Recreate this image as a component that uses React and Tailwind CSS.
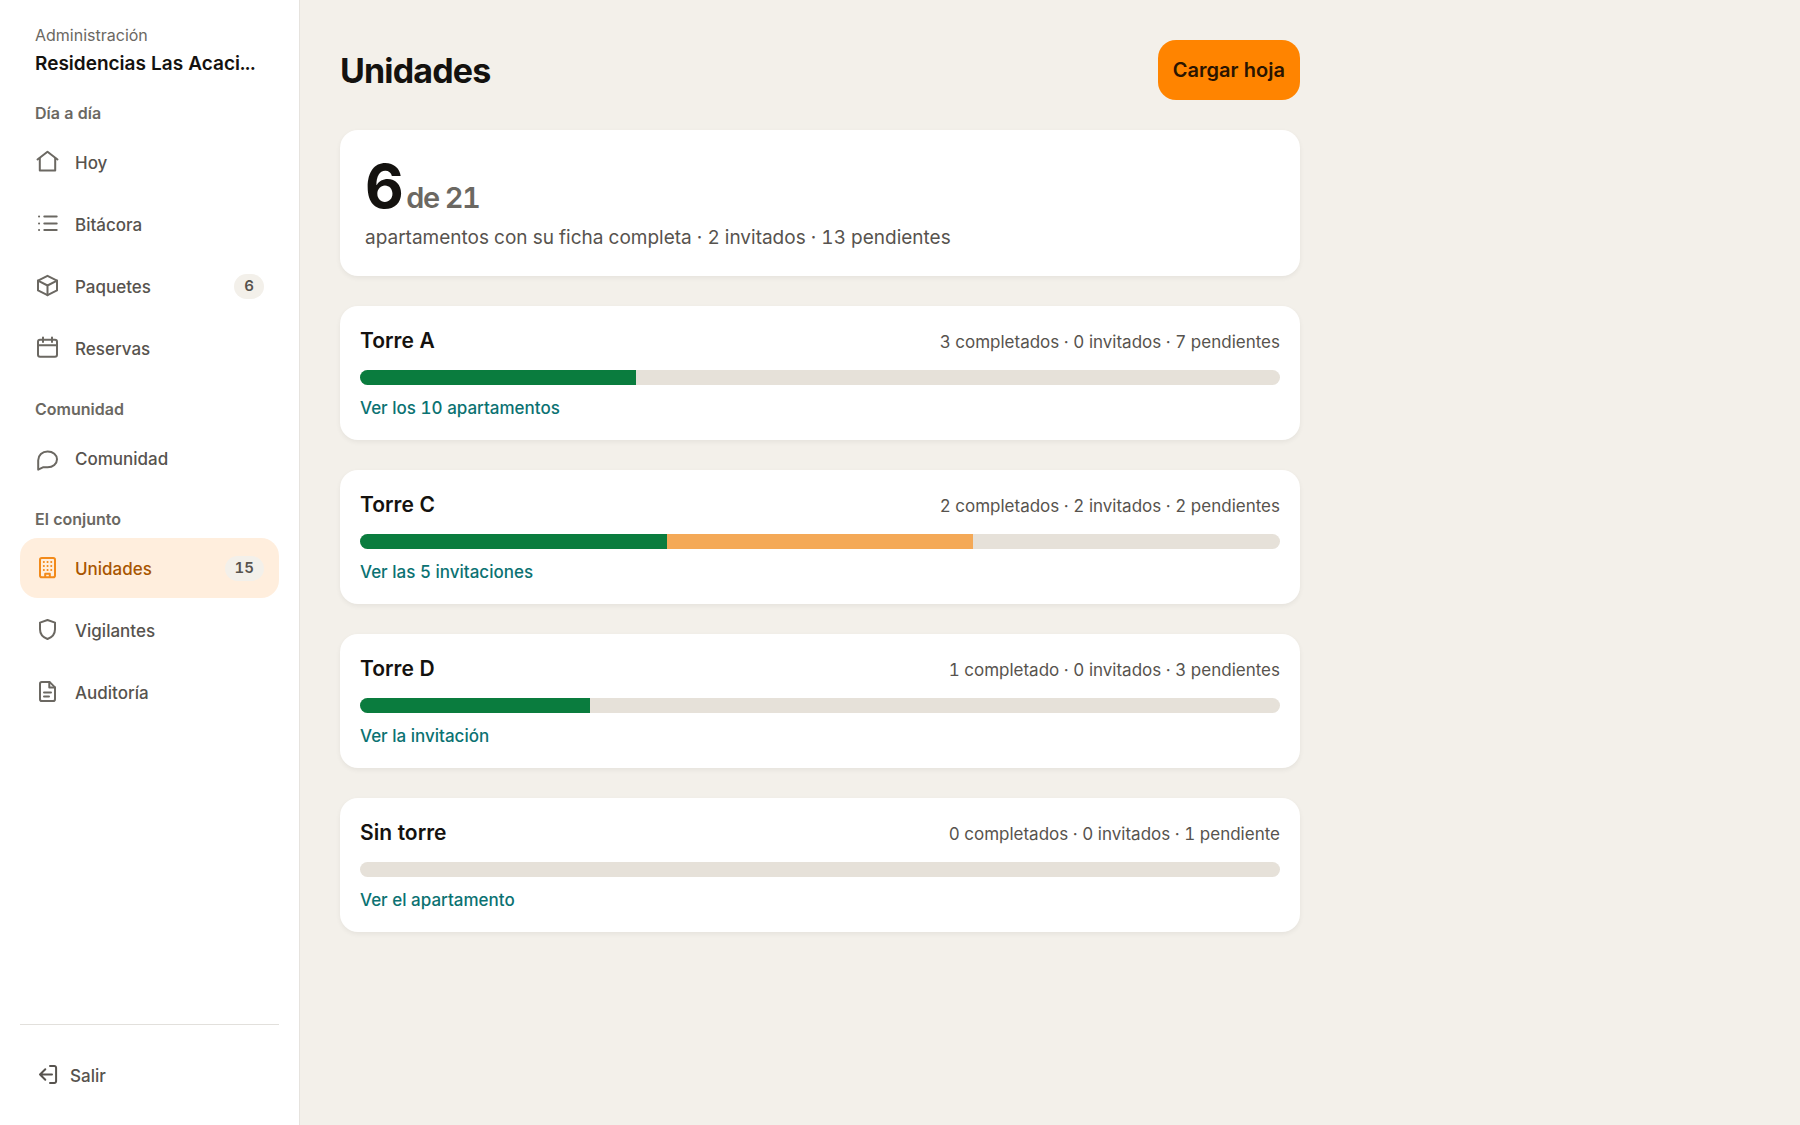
import { useState } from 'react'

const icons = {
  home: (
    <>
      <path d="M2.5 10.5 12.5 2.7l10 7.8" />
      <path d="M4.8 9v12.6h15.4V9" />
    </>
  ),
  list: (
    <>
      <path d="M9.3 5.6h12.4M9.3 12.4h12.4M9.3 19h12.4" />
      <path d="M4 5.6h.1M4 12.4h.1M4 19h.1" />
    </>
  ),
  box: (
    <>
      <path d="M12.5 2.8 22 7.6v9.8l-9.5 4.8L3 17.4V7.6z" />
      <path d="M3 7.6l9.5 4.9L22 7.6M12.5 12.5v9.7" />
    </>
  ),
  calendar: (
    <>
      <rect x="3" y="4.8" width="19" height="17" rx="2" />
      <path d="M3 10.2h19M8 2.5v4.6M17 2.5v4.6" />
    </>
  ),
  chat: (
    <path d="M3.2 24.6v-9.4c0-5 4-8.8 9.4-8.8s9.4 3.4 9.4 7.9-4 7.9-9.4 7.900H8.400z" />
  ),
  building: (
    <>
      <rect x="5" y="3" width="15" height="19.2" rx="1.8" />
      <path d="M10.200 22v-3.200h4.600V22" />
      <path d="M8.800 7h.1M12.500 7h.1M16.200 7h.1M8.800 11h.1M12.500 11h.1M16.200 11h.1M8.800 15h.1M12.500 15h.1M16.200 15h.1" />
    </>
  ),
  shield: (
    <path d="M12.500 3 20 5.600v6.600c0 4.700-2.700 8-7.500 9.800C7.700 20.200 5 16.900 5 12.200V5.600z" />
  ),
  file: (
    <>
      <path d="M14.500 2.900H6.800A1.800 1.800 0 0 0 5 4.700v15.600a1.800 1.800 0 0 0 1.800 1.800h11.400a1.800 1.800 0 0 0 1.800-1.800V8.400z" />
      <path d="M14.300 3v5.600H20M9 13.400h7M9 17.400h5" />
    </>
  ),
  logout: (
    <>
      <path d="M5 12.500h12M10.300 7.200 5 12.500l5.300 5.300" />
      <path d="M15 3.900h4.300a1.800 1.800 0 0 1 1.800 1.800v13.600a1.800 1.800 0 0 1-1.800 1.800H15" />
    </>
  )
}

const sections = [
  {
    title: 'Día a día',
    items: [
      { label: 'Hoy', icon: 'home' },
      { label: 'Bitácora', icon: 'list' },
      { label: 'Paquetes', icon: 'box', count: 6 },
      { label: 'Reservas', icon: 'calendar' }
    ]
  },
  { title: 'Comunidad', items: [{ label: 'Comunidad', icon: 'chat' }] },
  {
    title: 'El conjunto',
    items: [
      { label: 'Unidades', icon: 'building', count: 15 },
      { label: 'Vigilantes', icon: 'shield' },
      { label: 'Auditoría', icon: 'file' }
    ]
  }
]

const towers = [
  { name: 'Torre A', done: 3, invited: 0, pending: 7, link: 'Ver los 10 apartamentos' },
  { name: 'Torre C', done: 2, invited: 2, pending: 2, link: 'Ver las 5 invitaciones' },
  { name: 'Torre D', done: 1, invited: 0, pending: 3, link: 'Ver la invitación' },
  { name: 'Sin torre', done: 0, invited: 0, pending: 1, link: 'Ver el apartamento' }
]

const plural = (n, word) => `${n} ${word}${n === 1 ? '' : 's'}`

function Icon({ name, className = '' }) {
  return (
    <svg viewBox="0 1 25 25" fill="none" stroke="currentColor" strokeWidth="2" strokeLinecap="round" strokeLinejoin="round"
      aria-hidden="true" className={`size-[25px] shrink-0 ${className}`}>
      {icons[name]}
    </svg>
  )
}

function NavItem({ item, active, onSelect }) {
  return (
    <a href="#" onClick={(e) => { e.preventDefault(); onSelect(item.label) }}
      aria-current={active ? 'page' : undefined}
      className={`flex h-15 items-center gap-[15px] rounded-[18px] px-[15px] text-[17px] leading-6 font-medium ${active ? 'bg-[#ffeedd] text-[#a85500]' : 'text-[#57534e]'}`}>
      <Icon name={item.icon} className={active ? 'text-[#f28a1a]' : 'text-[#6b6862]'} />
      <span className="flex-1 pt-px">{item.label}</span>
      {item.count && (
        <span className="flex h-[25px] min-w-[30px] items-center justify-center rounded-full bg-[#f3f0ea] px-[10px] text-[15px] font-semibold text-[#57534e]">
          {item.count}
        </span>
      )}
    </a>
  )
}

function TowerCard({ tower }) {
  const { name, done, invited, pending, link } = tower
  const total = done + invited + pending

  return (
    <section className="rounded-[18px] bg-white p-5 shadow-[0_2px_5px_rgba(0,0,0,0.06)]">
      <div className="flex items-baseline justify-between">
        <h2 className="text-[21px] leading-[30px] font-semibold">{name}</h2>
        <p className="text-[17px] leading-6 text-[#57534e]">
          {plural(done, 'completado')} · {plural(invited, 'invitado')} · {plural(pending, 'pendiente')}
        </p>
      </div>
      <div className="mt-[14px] flex h-[15px] overflow-hidden rounded-full bg-[#e6e1d9]">
        <div className="bg-[#0a7c3e]" style={{ width: `${(done / total) * 100}%` }} />
        <div className="bg-[#f4a957]" style={{ width: `${(invited / total) * 100}%` }} />
      </div>
      <a href="#" className="mt-[11px] inline-block align-top text-[17px] leading-6 font-medium text-[#0b7272]">{link}</a>
    </section>
  )
}

export default function App() {
  const [current, setCurrent] = useState('Unidades')

  return (
    <div className="flex min-h-screen bg-[#f3f0ea] font-['Inter',sans-serif] text-[#14120f] tabular-nums">
      <aside className="flex w-[300px] shrink-0 flex-col border-r border-[#e6e3de] bg-white px-5 pt-6 pb-5">
        <div className="px-[15px]">
          <p className="text-[16px] leading-[22px] text-[#6b6862]">Administración</p>
          <p className="mt-[3px] truncate text-[19px] leading-[30px] font-semibold">Residencias Las Acaci...</p>
        </div>
        <nav className="mt-[3px]">
          {sections.map((section) => (
            <div key={section.title} className="pt-[21px]">
              <h2 className="mb-[9px] px-[15px] text-[16px] leading-5 font-semibold text-[#6b6862]">{section.title}</h2>
              <div className="flex flex-col gap-[2px]">
                {section.items.map((item) => (
                  <NavItem key={item.label} item={item} active={current === item.label} onSelect={setCurrent} />
                ))}
              </div>
            </div>
          ))}
        </nav>
        <div className="mt-auto border-t border-[#e2e0dc] pt-5">
          <button type="button" className="flex h-15 w-full items-center gap-[10px] px-[15px] text-[17px] leading-6 font-medium text-[#57534e]">
            <Icon name="logout" />
            <span className="pt-px">Salir</span>
          </button>
        </div>
      </aside>

      <main className="min-w-0 flex-1 p-10">
        <div className="flex max-w-[960px] flex-col gap-[30px]">
          <header className="flex items-center justify-between">
            <h1 className="pt-[2px] text-[34px] leading-[44px] font-bold tracking-tight">Unidades</h1>
            <button type="button" className="h-15 rounded-[18px] bg-[#ff8400] px-[15px] text-[20px] font-semibold text-[#2a1400]">Cargar hoja</button>
          </header>

          <section className="rounded-[18px] bg-white px-[25px] pt-6 pb-[23px] shadow-[0_2px_5px_rgba(0,0,0,0.06)]">
            <p className="text-[60px] leading-16 font-bold tracking-tight">
              6<span className="ml-1 text-[29px] leading-none font-semibold text-[#6b6862]">de 21</span>
            </p>
            <p className="mt-[5px] text-[19px] leading-[30px] text-[#57534e]">apartamentos con su ficha completa · 2 invitados · 13 pendientes</p>
          </section>

          {towers.map((tower) => <TowerCard key={tower.name} tower={tower} />)}
        </div>
      </main>
    </div>
  )
}
